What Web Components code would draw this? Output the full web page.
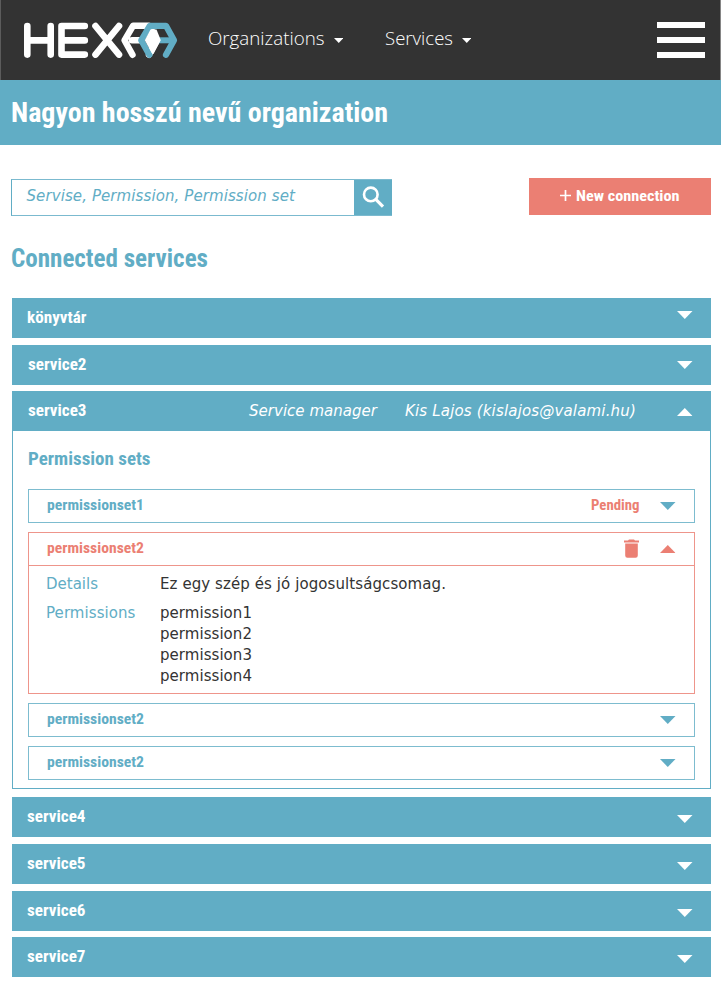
<!DOCTYPE html>
<html lang="hu">
<head>
<meta charset="utf-8">
<title>HEXAA</title>
<style>
:root{--blue:#61adc5;--red:#eb7f73;--dark:#333}
html,body{margin:0;background:#fff}
body{width:721px;height:992px;overflow:hidden;color:var(--dark);font-family:"DejaVu Sans",sans-serif}
</style>
</head>
<body>
<hexaa-app></hexaa-app>
<script>
const define = (name, css, html, ready) => {
  const t = document.createElement('template');
  t.innerHTML = `<style>*{box-sizing:border-box}${css}</style>${html}`;
  customElements.define(name, class extends HTMLElement {
    connectedCallback() {
      if (this.shadowRoot) return;
      this.attachShadow({mode: 'open'}).append(t.content.cloneNode(true));
      if (ready) ready(this, this.shadowRoot);
    }
  });
};

define('caret-icon', `
  :host{display:block;flex:none;width:15.5px;height:8px}
  svg{display:block;width:100%;height:100%}
  :host([up]) svg{transform:rotate(180deg)}`,
  `<svg viewBox="0 0 16 8" preserveAspectRatio="none"><path d="M0 0H16L8 8Z" fill="currentColor"/></svg>`);

define('hexaa-logo', `:host{display:block;flex:none;width:156px;height:40px}svg{display:block}`,
  `<svg width="156" height="40" viewBox="22 20 156 40" fill="none" stroke-width="6.6" stroke-linecap="round" stroke-linejoin="round">
    <g stroke="#fff">
      <path d="M27.3 26V54.6M50.7 26V54.6M27.3 40.4H50.7"/>
      <path d="M84.8 26H61.5V54.6H84.8M61.5 40.4H84.8"/>
      <path d="M95.5 26L119 54.6M119 26L95.5 54.6"/>
      <path stroke-width="6.4" d="M132.5 54.8L124.5 40.3L133 25.8H149L157 40.3L149 54.8M132 40.3H141"/>
    </g>
    <path stroke="#61adc5" stroke-width="6.2" d="M149.3 54.8L141.2 40.3L149.8 25.8H166L174 40.3L166 54.8"/>
    <path stroke="#61adc5" stroke-width="6" stroke-linecap="butt" d="M156 40.3H173"/>
    <path fill="#fff" d="M150.5 29.5H156.5L160.8 40.3L153.5 54L151.8 53L144.8 40.3Z"/>
  </svg>`);

define('app-header', `
  :host{display:flex;height:80px;background:#333;border-left:1px solid #5c5c5c;border-right:1px solid #858585;color:#fff;padding:20px 15px 0 21px;align-items:flex-start}
  nav{display:flex;margin:6px 0 0 30px}
  .n{display:flex}
  .n caret-icon{width:9.5px;height:5px;margin:11.5px 0 0 9px}
  .n + .n{margin-left:41.5px}
  button{margin:2px 0 0 auto;padding:0;border:0;background:none;width:48px;display:grid;gap:9px}
  i{display:block;height:6px;background:#fff}`,
  `<hexaa-logo></hexaa-logo>
   <nav>
    <div class="n"><fit-text face="nav" size="18" lh="24" w="116.5">Organizations</fit-text><caret-icon></caret-icon></div>
    <div class="n"><fit-text face="nav" size="18" lh="24" w="68">Services</fit-text><caret-icon></caret-icon></div>
   </nav>
   <button aria-label="Menu"><i></i><i></i><i></i></button>`);

define('search-box', `
  :host{display:flex;width:381px;height:37px;border:1px solid #7bbacf;border-left-color:var(--blue);color:var(--blue)}
  .f{flex:1;padding:6px 0 0 14.5px}
  .b{width:38px;margin-right:-1px;background:var(--blue)}svg{display:block}`,
  `<div class="f"><fit-text face="body" italic size="15" w="268.5"><slot></slot></fit-text></div>
   <div class="b"><svg width="38" height="36" viewBox="0 0 38 36" fill="none" stroke="#fff"><circle cx="16.8" cy="14.4" r="6.8" stroke-width="2.6"/><path d="M21.6 19.2L29 26.6" stroke-width="3.2"/></svg></div>`);

define('action-button', `
  :host{display:flex;width:182px;height:37px;background:var(--red);color:#fff;padding:8px 0 0 31px}
  svg{margin:3.5px 5px 0 0;flex:none}`,
  `<svg width="11" height="11" viewBox="0 0 11 11"><path d="M5.5 0V11M0 5.5H11" stroke="#fff" stroke-width="1.7"/></svg>
   <fit-text face="head" size="15" w="103.5"><slot></slot></fit-text>`);

define('service-row', `
  :host{display:block}
  .bar{display:flex;align-items:flex-start;height:40px;background:var(--blue);color:#fff;padding:9px 18.5px 0 15px}
  :host([shift]) .bar{padding-left:16px}
  caret-icon{margin-left:auto}
  .body{display:none}
  :host([open]) .body{display:block;border:1px solid var(--blue);border-top:0;padding:18px 15px 8px}`,
  `<div class="bar"><slot name="name"></slot><slot name="meta"></slot><caret-icon></caret-icon></div>
   <div class="body"><slot></slot></div>`,
  (el, root) => {
    const c = root.querySelector('caret-icon');
    c.style.marginTop = (el.getAttribute('caret') - 5) + 'px';
    if (el.hasAttribute('open')) c.setAttribute('up', '');
  });

define('permission-set', `
  :host{display:block;color:var(--blue);border:1px solid #7dbccf}
  :host([open]){color:var(--red);border-color:#ee958b}
  .bar{display:flex;height:32px;padding:5px 18.5px 0 17.5px}
  :host([open]) .bar{height:33px;border-bottom:1px solid #ee958b}
  .end{margin-left:auto;display:flex}
  caret-icon{margin:7px 0 0 21px}
  .body{display:none}
  :host([open]) .body{display:block}`,
  `<div class="bar"><slot name="name"></slot><div class="end"><slot name="end"></slot><caret-icon></caret-icon></div></div>
   <div class="body"><slot></slot></div>`,
  (el, root) => { if (el.hasAttribute('open')) root.querySelector('caret-icon').setAttribute('up', ''); });

define('trash-icon', `:host{display:block;margin-top:1px}svg{display:block}`,
  `<svg width="15" height="19" viewBox="0 0 15 19" fill="currentColor"><path d="M0 1.6H4L5 .4H10L11 1.6H15V3.4H0ZM1.2 4.4H13.8V16.5Q13.8 18.7 11.6 18.7H3.4Q1.2 18.7 1.2 16.5Z"/></svg>`);

const row = (name, w, caret, shift) =>
  `<service-row caret="${caret}" ${shift ? 'shift' : ''}><fit-text slot="name" face="head" size="17" w="${w}">${name}</fit-text></service-row>`;
const set = (name, extra = '') =>
  `<permission-set><fit-text slot="name" face="head" size="15.5" w="97">${name}</fit-text>${extra}</permission-set>`;

define('hexaa-app', `
  :host{display:block}
  .title{height:65px;background:var(--blue);color:#fff;padding:13px 0 0 11px}
  .tools{display:flex;justify-content:space-between;align-items:flex-start;padding:33px 10px 0 11px}
  search-box{margin-top:1px}
  h2,h3{margin:0;color:var(--blue);font-size:inherit}
  h2{padding:27px 0 0 11px;height:82px}
  .list{margin:0 10px 0 12px}
  .g7{margin-top:7px}.g6{margin-top:6px}.g8{margin-top:8px}
  .meta{display:flex;margin:1px 0 0 162.5px;gap:28px}
  .sets{display:grid;gap:9px;margin-top:20px}
  dl{margin:0;display:grid;align-content:start;grid-template-columns:114px 1fr;row-gap:9px;padding:8px 0 0 17px;height:127px}
  dt{color:var(--blue)}dd{margin:0;color:var(--dark)}`,
  `<app-header></app-header>
   <div class="title"><fit-text face="head" size="28" lh="40" w="377">Nagyon hosszú nevű organization</fit-text></div>
   <div class="tools"><search-box>Servise, Permission, Permission set</search-box><action-button>New connection</action-button></div>
   <h2><fit-text face="head" size="25" lh="32" w="197">Connected services</fit-text></h2>
   <div class="list">
    ${row('könyvtár', 59.5, 9)}
    <div class="g7">${row('service2', 58.5, 12, 1)}</div>
    <div class="g6"><service-row open shift caret="13">
      <fit-text slot="name" face="head" size="17" w="58.5">service3</fit-text>
      <div class="meta" slot="meta"><fit-text face="body" italic size="15" w="128">Service manager</fit-text><fit-text face="body" italic size="15" w="231">Kis Lajos (kislajos@valami.hu)</fit-text></div>
      <h3><fit-text face="head" size="19" w="122.5">Permission sets</fit-text></h3>
      <div class="sets">
       ${set('permissionset1', '<fit-text slot="end" face="head" size="14" w="48.5" style="color:var(--red)">Pending</fit-text>')}
       <permission-set open><fit-text slot="name" face="head" size="15.5" w="97">permissionset2</fit-text><trash-icon slot="end"></trash-icon>
        <dl><dt><fit-text face="body" size="15" w="52">Details</fit-text></dt><dd><fit-text face="body" size="15" w="286">Ez egy szép és jó jogosultságcsomag.</fit-text></dd>
        <dt><fit-text face="body" size="15" lh="21" w="89.5">Permissions</fit-text></dt><dd>${[1,2,3,4].map(i => `<fit-text face="body" size="15" lh="21" w="92">permission${i}</fit-text>`).join('')}</dd></dl>
       </permission-set>
       ${set('permissionset2')}${set('permissionset2')}
      </div>
    </service-row></div>
    <div class="g8">${row('service4', 58.5, 14)}</div>
    <div class="g7">${row('service5', 58.5, 14)}</div>
    <div class="g7">${row('service6', 58.5, 14)}</div>
    <div class="g6">${row('service7', 58.5, 14)}</div>
   </div>`);

/* One line of text, fitted to the width in its "w" attribute: body text by
   letter spacing, the other faces by a slight horizontal scale.
   Defined last so that every line is already slotted when it is measured. */
define('fit-text', `
  :host{display:block;flex:none;white-space:nowrap}
  :host([face=head]){font-family:"Roboto Condensed",Roboto,sans-serif;font-stretch:75%;font-weight:700}
  :host([face=nav]){font-family:"Open Sans",sans-serif;font-weight:300}
  :host([face=body]){font-family:Verdana,"DejaVu Sans",sans-serif}
  :host([italic]){font-style:italic}
  span{display:inline-block;transform-origin:0 50%}`,
  `<span><slot></slot></span>`,
  (el, root) => {
    const s = root.querySelector('span'), w = +el.getAttribute('w');
    el.style.fontSize = el.getAttribute('size') + 'px';
    el.style.lineHeight = (el.getAttribute('lh') || 20) + 'px';
    const n = s.getBoundingClientRect().width;
    el.style.width = w + 'px';
    if (!n) return;
    if (el.getAttribute('face') === 'body') {
      const host = el.getRootNode().host;
      const text = el.textContent.trim() || host.textContent.trim();
      s.style.letterSpacing = (w - n) / text.length + 'px';
    } else s.style.transform = `scaleX(${w / n})`;
  });
</script>
</body>
</html>
